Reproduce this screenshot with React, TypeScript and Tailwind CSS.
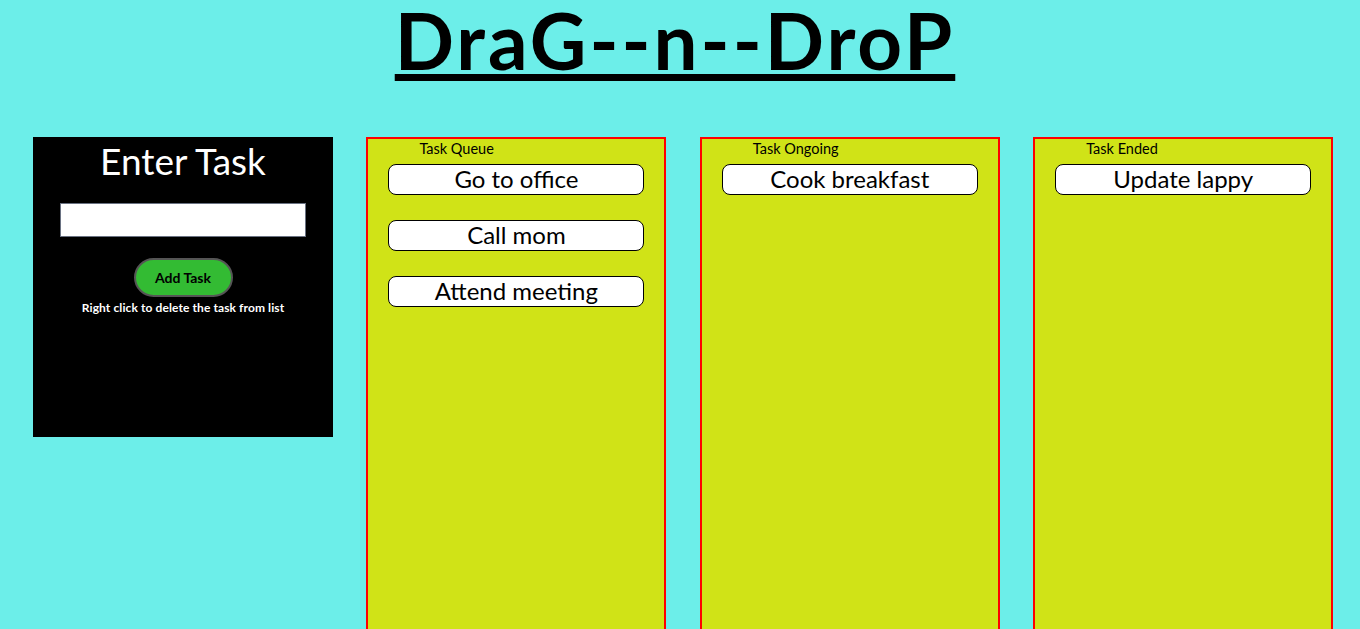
import React from 'react';

const columns = [
  { id: 'queue', title: 'Task Queue', tasks: ['Go to office', 'Call mom', 'Attend meeting'] },
  { id: 'ongoing', title: 'Task Ongoing', tasks: ['Cook breakfast'] },
  { id: 'ended', title: 'Task Ended', tasks: ['Update lappy'] },
];

const font = { fontFamily: 'Lato, "Open Sans", sans-serif' };

export default function App() {
  return (
    <div className="min-h-screen bg-[#6ceee9] pb-[12px]" style={font}>
      <h1 className="mr-[10px] text-center text-[78px] font-bold leading-[80px] tracking-[3px] text-black underline decoration-[7px] underline-offset-[4px]">
        DraG--n--DroP
      </h1>

      <div className="mt-[57px] flex items-start gap-[33.4px] pl-[33px]">
        {/* input panel */}
        <div className="flex h-[300px] w-[300px] flex-col items-center bg-black">
          <h2 className="mt-[1px] text-[37px] leading-[46px] text-white">Enter Task</h2>
          <input
            type="text"
            className="mt-[19px] h-[34px] w-[246px] border border-gray-500 bg-white px-2 outline-none"
          />
          <button className="mt-[21px] h-[39px] w-[99px] rounded-full border-2 border-[#555] bg-[#33bb33] text-[14px] font-bold text-black">
            Add Task
          </button>
          <p className="mt-[2px] text-[12px] font-bold tracking-[0.1px] text-white">Right click to delete the task from list</p>
        </div>

        {columns.map((col) => (
          <div key={col.id} className="h-[780px] w-[300px] border-2 border-[#ff0000] bg-[#d0e317]">
            <div className="pl-[51px] pt-[2px] text-[14.5px] leading-[16px] text-black">{col.title}</div>
            <ul className="mt-[7px] flex flex-col gap-[25px] px-[20px]">
              {col.tasks.map((t) => (
                <li
                  key={t}
                  className="h-[31px] w-[256px] rounded-[8px] border border-black bg-white text-center text-[24px] leading-[27px] text-black"
                >
                  {t}
                </li>
              ))}
            </ul>
          </div>
        ))}
      </div>
    </div>
  );
}
